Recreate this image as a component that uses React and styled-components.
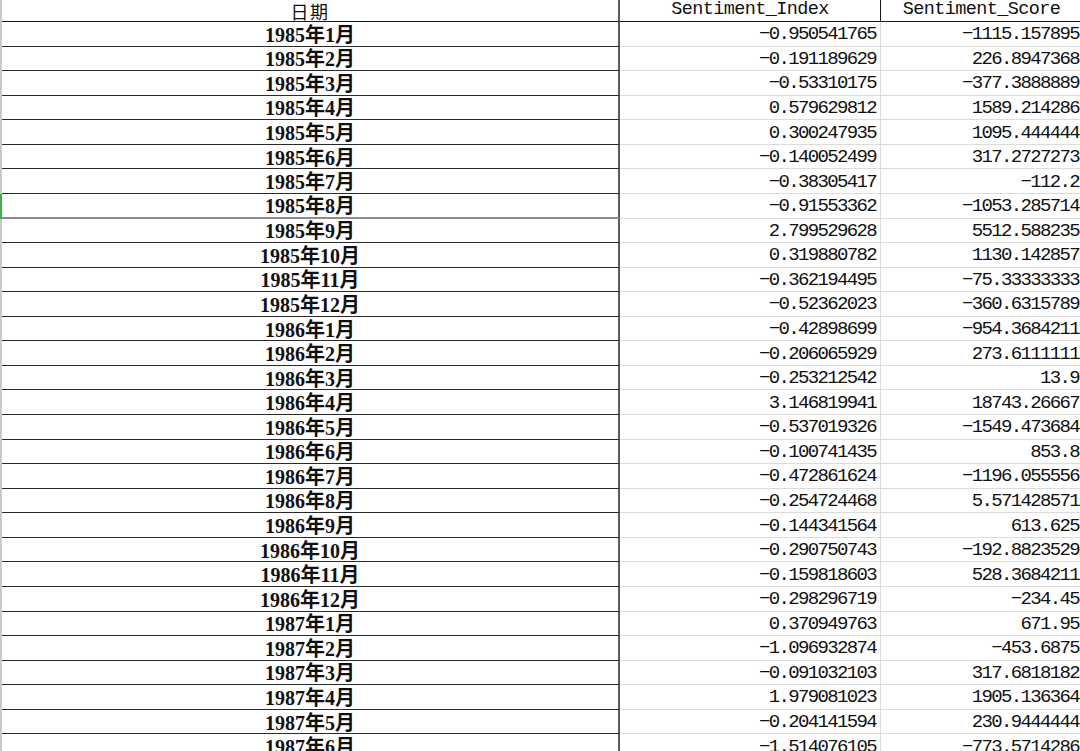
import React from 'react';
import styled, { createGlobalStyle } from 'styled-components';

const GlobalStyle = createGlobalStyle`
    html, body {
        margin: 0;
        padding: 0;
        background: #ffffff;
        overflow: hidden;
    }
`;

const ROW_H = 24.57;

const rows = [
    ['1985年1月', '−0.950541765', '−1115.157895'],
    ['1985年2月', '−0.191189629', '226.8947368'],
    ['1985年3月', '−0.53310175', '−377.3888889'],
    ['1985年4月', '0.579629812', '1589.214286'],
    ['1985年5月', '0.300247935', '1095.444444'],
    ['1985年6月', '−0.140052499', '317.2727273'],
    ['1985年7月', '−0.38305417', '−112.2'],
    ['1985年8月', '−0.91553362', '−1053.285714'],
    ['1985年9月', '2.799529628', '5512.588235'],
    ['1985年10月', '0.319880782', '1130.142857'],
    ['1985年11月', '−0.362194495', '−75.33333333'],
    ['1985年12月', '−0.52362023', '−360.6315789'],
    ['1986年1月', '−0.42898699', '−954.3684211'],
    ['1986年2月', '−0.206065929', '273.6111111'],
    ['1986年3月', '−0.253212542', '13.9'],
    ['1986年4月', '3.146819941', '18743.26667'],
    ['1986年5月', '−0.537019326', '−1549.473684'],
    ['1986年6月', '−0.100741435', '853.8'],
    ['1986年7月', '−0.472861624', '−1196.055556'],
    ['1986年8月', '−0.254724468', '5.571428571'],
    ['1986年9月', '−0.144341564', '613.625'],
    ['1986年10月', '−0.290750743', '−192.8823529'],
    ['1986年11月', '−0.159818603', '528.3684211'],
    ['1986年12月', '−0.298296719', '−234.45'],
    ['1987年1月', '0.370949763', '671.95'],
    ['1987年2月', '−1.096932874', '−453.6875'],
    ['1987年3月', '−0.091032103', '317.6818182'],
    ['1987年4月', '1.979081023', '1905.136364'],
    ['1987年5月', '−0.204141594', '230.9444444'],
    ['1987年6月', '−1.514076105', '−773.5714286'],
];

const Page = styled.div`
    width: 1080px;
    height: 751px;
    overflow: hidden;
    display: flex;
`;

const RowGutter = styled.div`
    width: 2px;
    flex: none;
    display: flex;
    flex-direction: column;
    background: #c9c9c9;
`;

const GutterMark = styled.div`
    height: ${(props) => props.h}px;
    flex: none;
    background: ${(props) => (props.active ? '#3daf4a' : 'transparent')};
`;

const Sheet = styled.div`
    display: grid;
    grid-template-columns: 618px 261px 202px;
    grid-template-rows: 22px;
    grid-auto-rows: ${ROW_H}px;
    align-content: start;
    flex: none;
`;

const Cell = styled.div`
    box-sizing: border-box;
    display: flex;
    align-items: center;
    white-space: nowrap;
    overflow: hidden;
    line-height: 1;
    color: #111;
`;

const HeaderCell = styled(Cell)`
    justify-content: center;
    overflow: visible;
    border-bottom: 1px solid #1c1c1c;
    border-right: ${(props) => (props.first ? '2px solid #5a5a5a' : '1px solid #1c1c1c')};
    font-family: ${(props) =>
        props.cjk
            ? '"Noto Sans CJK SC", sans-serif'
            : '"Liberation Mono", monospace'};
    font-size: ${(props) => (props.cjk ? '18px' : '18.5px')};
    letter-spacing: ${(props) => (props.cjk ? '1.5px' : '-0.6px')};
`;

const DateCell = styled(Cell)`
    justify-content: center;
    padding-top: 2px;
    border-bottom: ${(props) => (props.thick ? '2px solid #8d8d8d' : '1px solid #2a2a2a')};
    border-right: 2px solid #5a5a5a;
    font-family: "Liberation Serif", "Noto Sans CJK SC", serif;
    font-weight: 700;
    font-size: 20px;
`;

const NumCell = styled(Cell)`
    justify-content: flex-end;
    padding-top: 2px;
    padding-right: ${(props) => props.pr}px;
    border-bottom: 1px solid #dcdcdc;
    border-right: 1px solid #dcdcdc;
    font-family: "Liberation Mono", monospace;
    font-size: 19px;
    letter-spacing: -1.65px;
`;

const App = () => {
    return (
        <>
            <GlobalStyle />
            <Page>
                <RowGutter>
                    <GutterMark h={22} />
                    {rows.map((r, i) => (
                        <GutterMark key={r[0]} h={ROW_H} active={i === 7} />
                    ))}
                </RowGutter>
                <Sheet>
                    <HeaderCell first cjk>日期</HeaderCell>
                    <HeaderCell>Sentiment_Index</HeaderCell>
                    <HeaderCell>Sentiment_Score</HeaderCell>
                    {rows.map((r, i) => (
                        <React.Fragment key={r[0]}>
                            <DateCell thick={i === 7}>{r[0]}</DateCell>
                            <NumCell pr={4}>{r[1]}</NumCell>
                            <NumCell pr={3}>{r[2]}</NumCell>
                        </React.Fragment>
                    ))}
                </Sheet>
            </Page>
        </>
    );
};

export default App;
